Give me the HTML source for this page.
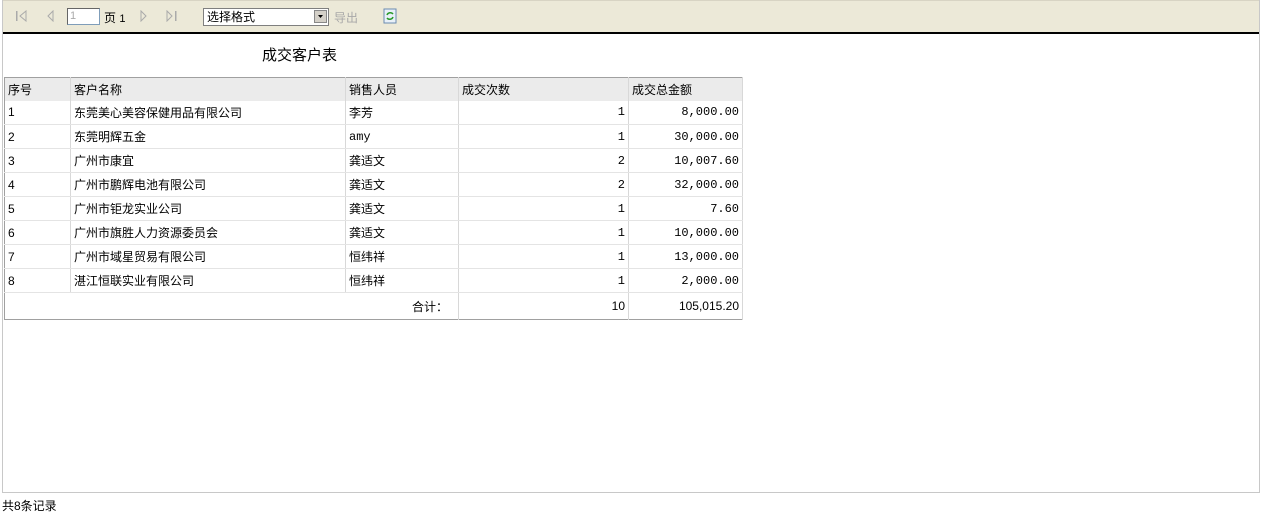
<!DOCTYPE html>
<html><head><meta charset="utf-8"><style>
*{margin:0;padding:0;box-sizing:border-box}
body{width:1262px;height:514px;background:#fff;font-family:"Liberation Sans","Noto Sans CJK SC",sans-serif;font-size:12px;color:#000;position:relative;overflow:hidden}
#frame{position:absolute;left:2px;top:0;width:1258px;height:493px;border:1px solid #c8c8c8;border-top:none}
#tb{position:absolute;left:3px;top:0;width:1256px;height:34px;background:#ece9d8;border-top:1px solid #d8d4c4;border-bottom:2px solid #000}
.ab{position:absolute}
.g{color:#a8a8a8;font-size:11px}
table{position:absolute;left:4px;top:77px;border-collapse:collapse;border:1px solid #a0a0a0}
td{height:24px;padding:0 3px;border-bottom:1px solid #e4e4e4;border-right:1px solid #d8d8d8;white-space:nowrap;font-size:12px}
tr.h td{background:#ebebeb;border-bottom:none;height:23px}
td.r{text-align:right}
.m{font-family:"Liberation Mono","Noto Sans CJK SC",monospace;font-size:12px}
</style></head><body>
<div id="frame"></div>
<div id="tb">
<svg class="ab" style="left:12px;top:9px" width="14" height="12"><rect x="1" y="1" width="1.5" height="10" fill="#aaa"/><path d="M11 1 L5 6 L11 11Z" fill="none" stroke="#aaa"/></svg>
<svg class="ab" style="left:42px;top:9px" width="10" height="12"><path d="M8 1 L3 6 L8 11Z" fill="none" stroke="#aaa"/></svg>
<div class="ab" style="left:64px;top:7px;width:33px;height:17px;background:#fff;border:1px solid #7f9db9;border-top-color:#666;border-left-color:#666;color:#aaa;font-size:11px;padding-left:2px;line-height:15px">1</div>
<div class="ab" style="left:101px;top:8px;font-size:12px">页 <span style="font-size:11px">1</span></div>
<svg class="ab" style="left:136px;top:9px" width="10" height="12"><path d="M2 1 L7 6 L2 11Z" fill="none" stroke="#aaa"/></svg>
<svg class="ab" style="left:162px;top:9px" width="14" height="12"><path d="M2 1 L7 6 L2 11Z" fill="none" stroke="#aaa"/><rect x="10" y="1" width="1.5" height="10" fill="#aaa"/></svg>
<div class="ab" style="left:200px;top:7px;width:126px;height:18px;background:#fff;border:1px solid #7f7f7f;font-size:12px;line-height:16px;padding-left:3px">选择格式</div>
<div class="ab" style="left:311px;top:9px;width:13px;height:13px;background:#d4d0c8;border:1px solid #888"><svg width="11" height="11"><path d="M3 4 L8 4 L5.5 7Z" fill="#000"/></svg></div>
<div class="ab g" style="left:331px;top:8px;font-size:12px">导出</div>
<svg class="ab" style="left:380px;top:7px" width="15" height="16"><rect x="1" y="1" width="12" height="14" fill="#e8f0f8" stroke="#6a8ab0"/><path d="M4 7 A3.5 3.5 0 0 1 10 6 M10 9 A3.5 3.5 0 0 1 4 10" stroke="#2a9a2a" stroke-width="1.5" fill="none"/></svg>
</div>
<div class="ab" style="left:262px;top:44px;font-size:15px">成交客户表</div>
<table>
<colgroup><col style="width:66px"><col style="width:275px"><col style="width:113px"><col style="width:170px"><col style="width:114px"></colgroup>
<tr class="h"><td>序号</td><td>客户名称</td><td>销售人员</td><td>成交次数</td><td>成交总金额</td></tr>
<tr><td>1</td><td>东莞美心美容保健用品有限公司</td><td>李芳</td><td class="r m">1</td><td class="r m">8,000.00</td></tr>
<tr><td>2</td><td>东莞明辉五金</td><td class="m">amy</td><td class="r m">1</td><td class="r m">30,000.00</td></tr>
<tr><td>3</td><td>广州市康宜</td><td>龚适文</td><td class="r m">2</td><td class="r m">10,007.60</td></tr>
<tr><td>4</td><td>广州市鹏辉电池有限公司</td><td>龚适文</td><td class="r m">2</td><td class="r m">32,000.00</td></tr>
<tr><td>5</td><td>广州市钜龙实业公司</td><td>龚适文</td><td class="r m">1</td><td class="r m">7.60</td></tr>
<tr><td>6</td><td>广州市旗胜人力资源委员会</td><td>龚适文</td><td class="r m">1</td><td class="r m">10,000.00</td></tr>
<tr><td>7</td><td>广州市域星贸易有限公司</td><td>恒纬祥</td><td class="r m">1</td><td class="r m">13,000.00</td></tr>
<tr><td>8</td><td>湛江恒联实业有限公司</td><td>恒纬祥</td><td class="r m">1</td><td class="r m">2,000.00</td></tr>
<tr><td colspan="3" class="r" style="border-bottom:none;height:27px;padding-right:10px">合计：</td><td class="r" style="border-bottom:none">10</td><td class="r" style="border-bottom:none">105,015.20</td></tr>
</table>
<div class="ab" style="left:2px;top:497px;font-size:12px">共8条记录</div>
</body></html>
